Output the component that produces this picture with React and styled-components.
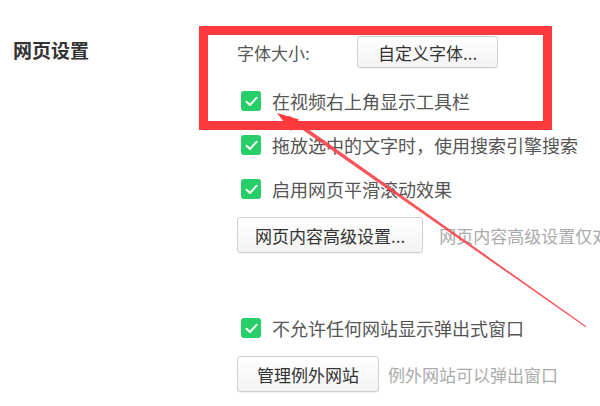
import React from "react";
import styled, { createGlobalStyle } from "styled-components";

const GlobalStyle = createGlobalStyle`
  html, body {
    margin: 0;
    padding: 0;
    background: #ffffff;
  }
  body {
    font-family: "Noto Sans CJK SC", "Noto Sans", sans-serif;
  }
`;

const Page = styled.div`
  position: relative;
  width: 600px;
  height: 406px;
  overflow: hidden;
  background: #fff;
`;

const Section = styled.section`
  display: grid;
  grid-template-columns: 224px 1fr;
  padding-left: 13px;
`;

const Title = styled.h3`
  margin: 0;
  padding-top: 39px;
  font-size: 19px;
  line-height: 22px;
  font-weight: 700;
  color: #333;
`;

const Column = styled.div`
  display: flex;
  flex-direction: column;
  min-width: 0;
`;

const Row = styled.div`
  display: flex;
  align-items: center;
  height: ${(p) => p.$h || 20}px;
  margin-top: ${(p) => p.$top || 0}px;
  white-space: nowrap;
`;

const Label = styled.span`
  width: 120px;
  font-size: 17px;
  color: #555;
`;

const Button = styled.button`
  height: ${(p) => p.$h || 36}px;
  padding: 0 ${(p) => p.$pad || 19}px;
  font-family: inherit;
  font-size: 17px;
  color: #333;
  background: linear-gradient(#ffffff, #f3f3f3);
  border: 1px solid #cfcfcf;
  border-radius: 3px;
  box-shadow: 0 1px 1px rgba(0, 0, 0, 0.06);
  white-space: nowrap;
  flex-shrink: 0;
`;

const Check = styled.span`
  display: inline-flex;
  align-items: center;
  justify-content: center;
  width: 20px;
  height: 20px;
  margin-left: 4px;
  border-radius: 3px;
  background: #28cf69;
  flex-shrink: 0;
`;

const CheckText = styled.span`
  margin-left: 11px;
  font-size: 18px;
  color: #555;
`;

const Hint = styled.span`
  margin-left: ${(p) => p.$gap || 10}px;
  font-size: 17px;
  color: #ababab;
`;

const Highlight = styled.div`
  position: absolute;
  left: 199px;
  top: 26px;
  width: 353px;
  height: 104px;
  box-sizing: border-box;
  border: 9px solid #fc3a3e;
  pointer-events: none;
`;

const ArrowLayer = styled.svg`
  position: absolute;
  left: 0;
  top: 0;
  pointer-events: none;
`;

const CheckItem = ({ top, children }) => (
  <Row $top={top}>
    <Check>
      <svg width="13" height="11" viewBox="0 0 13 11">
        <path d="M1.5 5.8 L5 9 L11.5 1.8" fill="none" stroke="#fff" strokeWidth="2" strokeLinecap="round" strokeLinejoin="round" />
      </svg>
    </Check>
    <CheckText>{children}</CheckText>
  </Row>
);

export default function App() {
  return (
    <>
      <GlobalStyle />
      <Page>
        <Section>
          <Title>网页设置</Title>
          <Column>
            <Row $top={36} $h={32}>
              <Label>字体大小:</Label>
              <Button $h={32} $pad={20}>自定义字体...</Button>
            </Row>
            <CheckItem top={23}>在视频右上角显示工具栏</CheckItem>
            <CheckItem top={24}>拖放选中的文字时，使用搜索引擎搜索</CheckItem>
            <CheckItem top={24}>启用网页平滑滚动效果</CheckItem>
            <Row $top={18} $h={36}>
              <Button $pad={17}>网页内容高级设置...</Button>
              <Hint $gap={16}>网页内容高级设置仅对部分网站生效</Hint>
            </Row>
            <CheckItem top={65}>不允许任何网站显示弹出式窗口</CheckItem>
            <Row $top={18} $h={36}>
              <Button>管理例外网站</Button>
              <Hint $gap={9}>例外网站可以弹出窗口</Hint>
            </Row>
          </Column>
        </Section>
        <ArrowLayer width="600" height="406" viewBox="0 0 600 406">
          <polygon points="586,327.5 287,119 289,115.5 586,326" fill="#f6454a" opacity="0.9" />
          <polygon points="277,113 299,119.5 291,131" fill="#fc3a3e" />
        </ArrowLayer>
        <Highlight />
      </Page>
    </>
  );
}
